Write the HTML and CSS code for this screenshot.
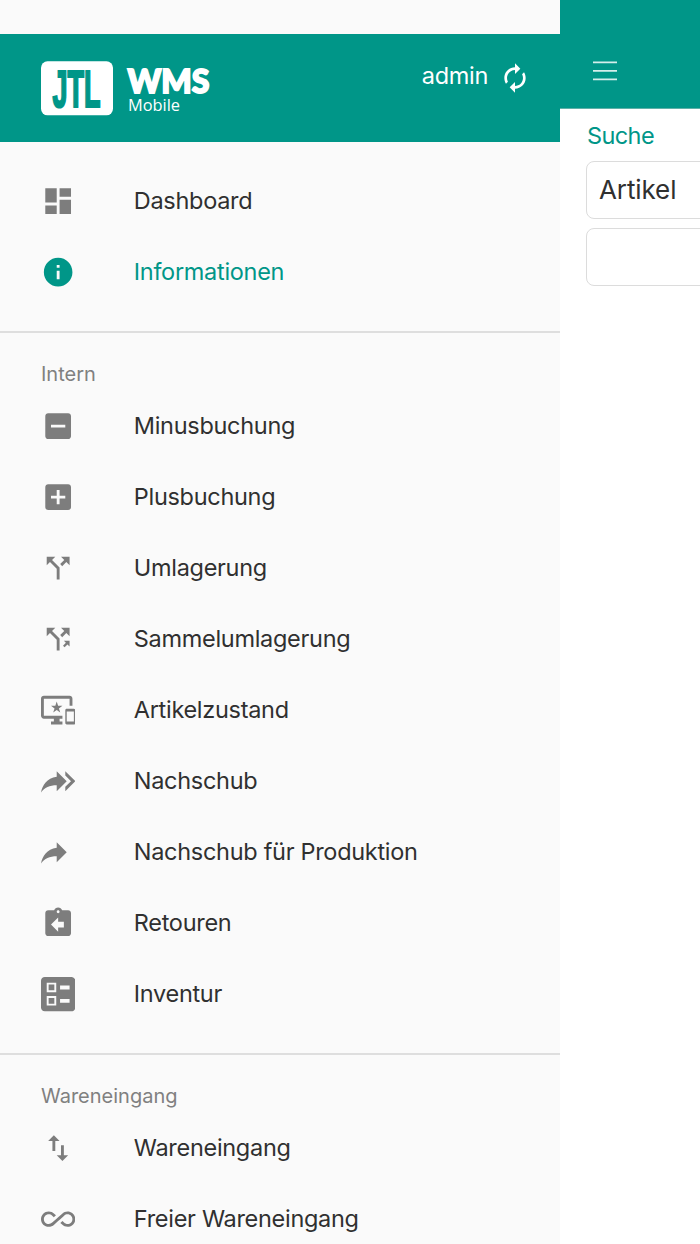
FILE: index.html
```html
<!DOCTYPE html>
<html lang="de">
<head>
  <meta charset="UTF-8" />
  <meta name="viewport" content="width=device-width, initial-scale=1.0" />
  <title>JTL WMS Mobile</title>
  <link rel="stylesheet" href="styles.css">
</head>
<body>
  <nav class="sidebar">
    <header class="sidebar-header">
      <svg class="logo" width="172" height="56" viewBox="0 0 172 56">
        <rect x="0" y="0.3" width="72" height="54" rx="6.5" fill="#fff"/>
        <text class="logo-jtl" x="11.5" y="46.1" textLength="48" lengthAdjust="spacingAndGlyphs">JTL</text>
        <text class="logo-wms" x="86.5" y="32" textLength="82" lengthAdjust="spacingAndGlyphs">WMS</text>
        <text class="logo-mobile" x="87" y="49.7" textLength="52" lengthAdjust="spacingAndGlyphs">Mobile</text>
      </svg>
      <div class="user">
        <span>admin</span>
        <svg class="refresh" viewBox="0 0 24 24"><path d="M12 6v3l4-4-4-4v3c-4.42 0-8 3.58-8 8 0 1.57.46 3.03 1.24 4.26L6.7 14.8c-.45-.83-.7-1.79-.7-2.8 0-3.31 2.69-6 6-6zm6.76 1.74L17.3 9.2c.44.84.7 1.79.7 2.8 0 3.31-2.69 6-6 6v-3l-4 4 4 4v-3c4.42 0 8-3.58 8-8 0-1.57-.46-3.03-1.24-4.26z"/></svg>
      </div>
    </header>

    <section class="group first">
      <a class="item">
        <svg class="icon" viewBox="0 0 24 24"><path d="M3 13h8V3H3v10zm0 8h8v-6H3v6zm10 0h8V11h-8v10zm0-18v6h8V3h-8z"/></svg>
        <span>Dashboard</span>
      </a>
      <a class="item active">
        <svg class="icon" viewBox="0 0 24 24"><path d="M12 2C6.48 2 2 6.48 2 12s4.48 10 10 10 10-4.48 10-10S17.52 2 12 2zm1 15h-2v-6h2v6zm0-8h-2V7h2v2z"/></svg>
        <span>Informationen</span>
      </a>
    </section>

    <section class="group">
      <h2>Intern</h2>
      <a class="item">
        <svg class="icon" viewBox="0 0 24 24"><path d="M19 3H5c-1.1 0-2 .9-2 2v14c0 1.1.9 2 2 2h14c1.1 0 2-.9 2-2V5c0-1.1-.9-2-2-2zm-2 10H7v-2h10v2z"/></svg>
        <span>Minusbuchung</span>
      </a>
      <a class="item">
        <svg class="icon" viewBox="0 0 24 24"><path d="M19 3H5c-1.1 0-2 .9-2 2v14c0 1.1.9 2 2 2h14c1.1 0 2-.9 2-2V5c0-1.1-.9-2-2-2zm-2 10h-4v4h-2v-4H7v-2h4V7h2v4h4v2z"/></svg>
        <span>Plusbuchung</span>
      </a>
      <a class="item">
        <svg class="icon" viewBox="0 0 24 24"><path d="M14 4l2.29 2.29-2.88 2.88 1.42 1.42 2.88-2.88L20 10V4zm-4 0H4v6l2.29-2.29 4.71 4.7V20h2v-8.41l-5.29-5.3z"/></svg>
        <span>Umlagerung</span>
      </a>
      <a class="item">
        <svg class="icon" viewBox="0 0 24 24"><path d="M14 4l2.29 2.29-2.88 2.88 1.42 1.42 2.88-2.88L20 10V4zm-4 0H4v6l2.29-2.29 4.71 4.7V20h2v-8.41l-5.29-5.3z"/><path d="M16 13.2l1.4 1.4-2 2 1.1 1.1 2-2 1.5 1.5v-4z"/></svg>
        <span>Sammelumlagerung</span>
      </a>
      <a class="item">
        <svg class="icon" viewBox="0 0 24 24"><path d="M23 11.01L18 11c-.55 0-1 .45-1 1v9c0 .55.45 1 1 1h5c.55 0 1-.45 1-1v-9c0-.55-.45-.99-1-.99zM23 20h-5v-7h5v7zM20 2H2C.89 2 0 2.89 0 4v12c0 1.1.89 2 2 2h7v2H7v2h8v-2h-2v-2h2v-2H2V4h18v5h2V4c0-1.11-.9-2-2-2zm-8.03 7L11 6l-.97 3H7l2.47 1.76-.94 2.91 2.47-1.8 2.47 1.8-.94-2.91L15 9h-3.03z"/></svg>
        <span>Artikelzustand</span>
      </a>
      <a class="item">
        <svg class="icon" viewBox="0 0 24 24"><path d="M17 8V5l7 7-7 7v-3l4-4-4-4zm-6 1V5l7 7-7 7v-4.1c-5 0-8.5 1.6-11 5.1 1-5 4-10 11-11z"/></svg>
        <span>Nachschub</span>
      </a>
      <a class="item">
        <svg class="icon" viewBox="0 0 24 24"><path d="M11 9V5l7 7-7 7v-4.1c-5 0-8.5 1.6-11 5.1 1-5 4-10 11-11z"/></svg>
        <span>Nachschub für Produktion</span>
      </a>
      <a class="item">
        <svg class="icon" viewBox="0 0 24 24"><path d="M19 3h-4.18C14.4 1.84 13.3 1 12 1c-1.3 0-2.4.84-2.82 2H5c-1.1 0-2 .9-2 2v14c0 1.1.9 2 2 2h14c1.1 0 2-.9 2-2V5c0-1.1-.9-2-2-2zm-7 0c.55 0 1 .45 1 1s-.45 1-1 1-1-.45-1-1 .45-1 1-1zm4 12h-4v3l-5-5 5-5v3h4v4z"/></svg>
        <span>Retouren</span>
      </a>
      <a class="item">
        <svg class="icon" viewBox="3 3 18 18"><path d="M13 9.5h5v-2h-5v2zm0 7h5v-2h-5v2zm6 4.5H5c-1.1 0-2-.9-2-2V5c0-1.1.9-2 2-2h14c1.1 0 2 .9 2 2v14c0 1.1-.9 2-2 2zM6 11h5V6H6v5zm1-4h3v3H7V7zM6 18h5v-5H6v5zm1-4h3v3H7v-3z"/></svg>
        <span>Inventur</span>
      </a>
    </section>

    <section class="group">
      <h2>Wareneingang</h2>
      <a class="item">
        <svg class="icon" viewBox="0 0 24 24"><path d="M9 3L5 6.99h3V14h2V6.99h3L9 3zm7 14.01V10h-2v7.01h-3L15 21l4-3.99h-3z"/></svg>
        <span>Wareneingang</span>
      </a>
      <a class="item">
        <svg class="icon" viewBox="0 0 24 24"><path d="M18.6 6.62c-1.44 0-2.8.56-3.77 1.53L12 10.66 10.48 12h.01L7.8 14.39c-.64.64-1.49.99-2.4.99-1.87 0-3.39-1.51-3.39-3.38S3.53 8.62 5.4 8.62c.91 0 1.76.35 2.44 1.03l1.13 1 1.51-1.34L9.22 8.2C8.2 7.18 6.84 6.62 5.4 6.62 2.42 6.62 0 9.04 0 12s2.42 5.38 5.4 5.38c1.44 0 2.8-.56 3.77-1.53l2.83-2.5.01.01L13.52 12h-.01l2.69-2.39c.64-.64 1.49-.99 2.4-.99 1.87 0 3.39 1.51 3.39 3.38s-1.52 3.38-3.39 3.38c-.9 0-1.76-.35-2.44-1.03l-1.14-1.01-1.51 1.34 1.27 1.12c1.02 1.01 2.37 1.57 3.82 1.57 2.98 0 5.4-2.41 5.4-5.38s-2.42-5.37-5.4-5.37z"/></svg>
        <span>Freier Wareneingang</span>
      </a>
    </section>
  </nav>

  <main class="page">
    <header class="page-header">
      <svg width="24" height="20" viewBox="0 0 24 20"><path d="M0 1.3h24M0 9.8h24M0 18.4h24" stroke="#d4eeeb" stroke-width="1.7"/></svg>
    </header>
    <div class="search">
      <label>Suche</label>
      <div class="field">Artikel</div>
      <div class="field"></div>
    </div>
  </main>
</body>
</html>
```
FILE: styles.css
```css
* {
  box-sizing: border-box;
}

body {
  margin: 0;
  font-family: Inter, sans-serif;
  font-size: 23.5px;
  letter-spacing: -0.3px;
  color: #303030;
  background: #fff;
  display: flex;
  height: 1244px;
  overflow: hidden;
}

.sidebar {
  flex: 0 0 560px;
  padding-top: 34px;
  background: #fafafa;
  overflow: hidden;
}

.sidebar-header {
  display: flex;
  justify-content: space-between;
  height: 108px;
  padding: 27px 29px 0 41px;
  background: #009688;
  color: #fff;
}

.logo {
  letter-spacing: 0;
}

.logo-jtl {
  font-family: "Liberation Sans Narrow", "Liberation Sans", sans-serif;
  font-size: 52px;
  font-weight: 700;
  fill: #009688;
  stroke: #009688;
  stroke-width: 2.2px;
}

.logo-wms {
  font-family: Lato, sans-serif;
  font-size: 33px;
  font-weight: 900;
  fill: #fff;
  stroke: #fff;
  stroke-width: 1.8px;
}

.logo-mobile {
  font-family: "Open Sans", sans-serif;
  font-size: 16px;
  fill: #fff;
}

.user {
  display: flex;
  height: 34px;
  gap: 11px;
  line-height: 30px;
}

.refresh {
  width: 32px;
  height: 32px;
  margin-top: 1px;
  fill: #fff;
}

.group {
  border-top: 2px solid #dedede;
  padding-bottom: 24px;
}

.group.first {
  border-top: none;
  padding-top: 23px;
}

.group h2 {
  height: 57px;
  margin: 0;
  padding-left: 41px;
  font-size: 20px;
  font-weight: 400;
  line-height: 82px;
  letter-spacing: 0;
  color: #808080;
}

.item {
  display: flex;
  align-items: center;
  height: 71px;
  padding-left: 40.5px;
  gap: 59px;
}

.item span {
  line-height: 30px;
}

.icon {
  width: 34.3px;
  height: 34.3px;
  margin-top: 2px;
  fill: #7d7d7d;
}

.item.active {
  color: #009688;
}

.item.active .icon {
  fill: #009688;
}

.page {
  flex: 1;
  overflow: hidden;
}

.page-header {
  height: 109px;
  padding: 61px 0 0 33px;
  background: #009688;
  border-bottom: 1px solid #5fb0a8;
}

.page-header svg {
  display: block;
}

.search {
  width: 660px;
  padding: 12px 26px;
}

.search label {
  display: block;
  height: 40px;
  padding-left: 1px;
  line-height: 30px;
  letter-spacing: -0.6px;
  color: #009688;
}

.field {
  height: 58px;
  margin-bottom: 9px;
  padding-left: 12px;
  border: 1px solid #dcdcdc;
  border-radius: 8px;
  font-size: 26px;
  line-height: 56px;
  letter-spacing: -0.1px;
}
```
